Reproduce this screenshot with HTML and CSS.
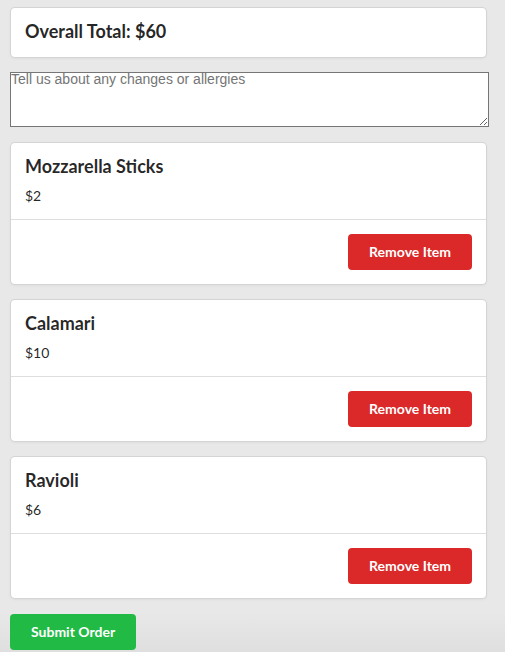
FILE: index.html
```html
<!DOCTYPE html>
<html>
<head>
<meta charset="utf-8">
<link rel="stylesheet" href="styles.css">
</head>
<body>
<div class="page">
  <div class="total-card">
    <h3 class="total">Overall Total: $60</h3>
  </div>
  <textarea class="notes" placeholder="Tell us about any changes or allergies"></textarea>
  <div class="card">
    <div class="content">
      <div class="header">Mozzarella Sticks</div>
      <div class="price">$2</div>
    </div>
    <div class="extra">
      <button class="btn red">Remove Item</button>
    </div>
  </div>
  <div class="card">
    <div class="content">
      <div class="header">Calamari</div>
      <div class="price">$10</div>
    </div>
    <div class="extra">
      <button class="btn red">Remove Item</button>
    </div>
  </div>
  <div class="card">
    <div class="content">
      <div class="header">Ravioli</div>
      <div class="price">$6</div>
    </div>
    <div class="extra">
      <button class="btn red">Remove Item</button>
    </div>
  </div>
  <div class="actions">
    <button class="btn green">Submit Order</button>
  </div>
</div>
</body>
</html>
```
FILE: styles.css
```css
html, body {
  margin: 0;
  height: 100%;
}
body {
  background: #e8e8e8 linear-gradient(to bottom, rgba(0, 0, 0, 0) calc(100% - 40px), rgba(0, 0, 0, 0.04) 100%);
  font-family: Lato, "Helvetica Neue", Arial, sans-serif;
  font-size: 14px;
  color: rgba(0, 0, 0, 0.87);
  overflow: hidden;
}
.page {
  width: 475px;
  padding: 8px 0 0 11px;
  display: flex;
  flex-direction: column;
}
.total-card,
.card {
  background: #fff;
  border-radius: 4px;
  box-shadow: 0 1px 3px 0 #d4d4d5, 0 0 0 1px #d4d4d5;
}
.total-card {
  height: 49px;
  padding: 0 14px;
  display: flex;
  align-items: center;
}
.total {
  margin: -2px 0 0 0;
  font-size: 18px;
  font-weight: 700;
  line-height: 23px;
  color: rgba(0, 0, 0, 0.87);
}
.notes {
  box-sizing: border-box;
  margin: 15px 0 16px -1px;
  width: 479px;
  height: 55px;
  border: 1px solid #767676;
  padding: 0 1px 0 0;
  font-family: "Liberation Sans", Arial, sans-serif;
  font-size: 14px;
  line-height: 12px;
  resize: vertical;
  background: #fff;
}
.notes::placeholder {
  color: #757575;
}
.card {
  display: flex;
  flex-direction: column;
  margin-bottom: 16px;
}
.content {
  padding: 12px 14px 14px;
}
.header {
  font-size: 18px;
  font-weight: 700;
  line-height: 23px;
  color: rgba(0, 0, 0, 0.85);
}
.price {
  margin-top: 8px;
  line-height: 19px;
}
.extra {
  border-top: 1px solid rgba(34, 36, 38, 0.15);
  padding: 14px;
  display: flex;
  justify-content: flex-end;
}
.btn {
  border: none;
  border-radius: 4px;
  font-family: Lato, "Helvetica Neue", Arial, sans-serif;
  font-size: 14px;
  font-weight: 700;
  line-height: 1em;
  padding: 11px 21px;
  color: #fff;
  cursor: pointer;
}
.red {
  background: #db2828;
}
.green {
  background: #21ba45;
}
.actions {
  display: flex;
  margin: 0 0 0 -1px;
}
```
